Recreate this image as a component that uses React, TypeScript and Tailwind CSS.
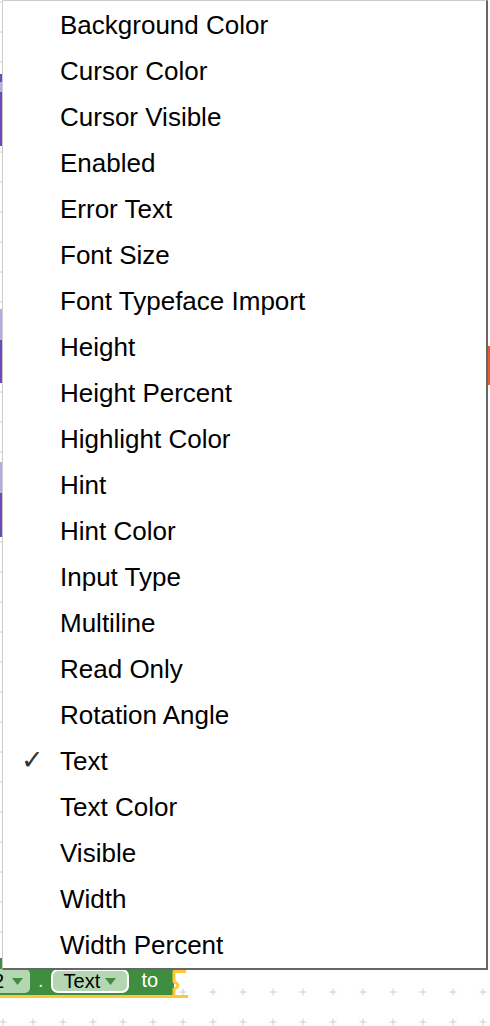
import React from 'react';

const items = [
    'Background Color',
    'Cursor Color',
    'Cursor Visible',
    'Enabled',
    'Error Text',
    'Font Size',
    'Font Typeface Import',
    'Height',
    'Height Percent',
    'Highlight Color',
    'Hint',
    'Hint Color',
    'Input Type',
    'Multiline',
    'Read Only',
    'Rotation Angle',
    'Text',
    'Text Color',
    'Visible',
    'Width',
    'Width Percent'
];

const selected = 'Text';

// small dropdown triangle used in block fields
const Arrow: React.FC<{ className?: string }> = ({ className }) => (
    <svg width="11" height="7" viewBox="0 0 11 7" className={className}>
        <path d="M0 0 H11 L5.5 7 Z" fill="#3f8d3f" />
    </svg>
);

const App: React.FC = () => {
    return (
        <div
            className="relative h-[1026px] w-[490px] overflow-hidden bg-white"
            style={{ fontFamily: '"Liberation Sans", Arial, sans-serif' }}
        >
            {/* Workspace grid */}
            <svg className="absolute inset-0" width="490" height="1026">
                <defs>
                    <pattern id="grid" x="-12" y="-13" width="30" height="30" patternUnits="userSpaceOnUse">
                        <path d="M11.5 15 H18.5 M15 11.5 V18.5" stroke="#cccccc" strokeWidth="1" />
                    </pattern>
                </defs>
                <rect width="490" height="1026" fill="url(#grid)" />
            </svg>

            {/* Blocks peeking out behind the menu */}
            <div className="absolute left-0 top-[74px] flex w-[3px] flex-col">
                <div className="h-[8px] bg-[#6a4bb8]" />
                <div className="h-[10px] bg-[#b8abdf]" />
                <div className="h-[54px] bg-[#6a4bb8]" />
            </div>
            <div className="absolute left-0 top-[309px] flex w-[3px] flex-col">
                <div className="h-[31px] bg-[#b8abdf]" />
                <div className="h-[43px] bg-[#6a4bb8]" />
            </div>
            <div className="absolute left-0 top-[462px] flex w-[3px] flex-col">
                <div className="h-[31px] bg-[#b8abdf]" />
                <div className="h-[44px] bg-[#6a4bb8]" />
            </div>
            <div className="absolute left-[486px] top-[346px] h-[39px] w-[4px] bg-[#e95a2c]" />

            {/* Setter block at the bottom */}
            <div className="absolute left-0 top-[958px] flex h-[40px] w-[174px] items-end border-b-[3px] border-[#fdc933] bg-[#3f8d3f] pb-[2px]">
                <div className="ml-[-12px] flex h-[24px] w-[42px] items-center rounded-[5px] bg-[#b4d6b2] pl-[5px]">
                    <span className="text-[20px] leading-none text-black">2</span>
                    <Arrow className="ml-[8px]" />
                </div>
                <span className="ml-[8px] mb-[3px] text-[20px] leading-none text-[#e8f2e8]">.</span>
                <div className="ml-[7px] flex h-[24px] w-[78px] items-center rounded-[7px] border-2 border-white bg-[#b4d6b2] pl-[11px]">
                    <span className="text-[20px] leading-none text-black">Text</span>
                    <Arrow className="ml-[5px]" />
                </div>
                <span className="mb-[3px] ml-[13px] text-[20px] leading-none text-white">to</span>
            </div>
            <svg className="absolute left-[168px] top-[964px]" width="24" height="36" viewBox="0 0 24 36">
                <path
                    d="M18 7.5 H6 V18 Q14 21.5 6 25 V32.5 H20"
                    fill="none"
                    stroke="#fdc933"
                    strokeWidth="3"
                    strokeLinejoin="round"
                />
            </svg>

            {/* Dropdown menu */}
            <div className="absolute left-[2px] top-0 w-[486px] border-b-2 border-l border-r-2 border-t border-b-[#666666] border-l-[#cccccc] border-r-[#666666] border-t-[#cccccc] bg-white pt-px">
                {items.map((item) => (
                    <div key={item} className="flex h-[46px] items-center">
                        <div className="w-[57px] pl-[18px]">
                            {item === selected && (
                                <span
                                    className="text-[27px] font-bold leading-none text-[#333333]"
                                    style={{ fontFamily: '"DejaVu Sans", sans-serif' }}
                                >
                                    ✓
                                </span>
                            )}
                        </div>
                        <span className="text-[26px] leading-none text-black">{item}</span>
                    </div>
                ))}
            </div>
        </div>
    );
};

export default App;
